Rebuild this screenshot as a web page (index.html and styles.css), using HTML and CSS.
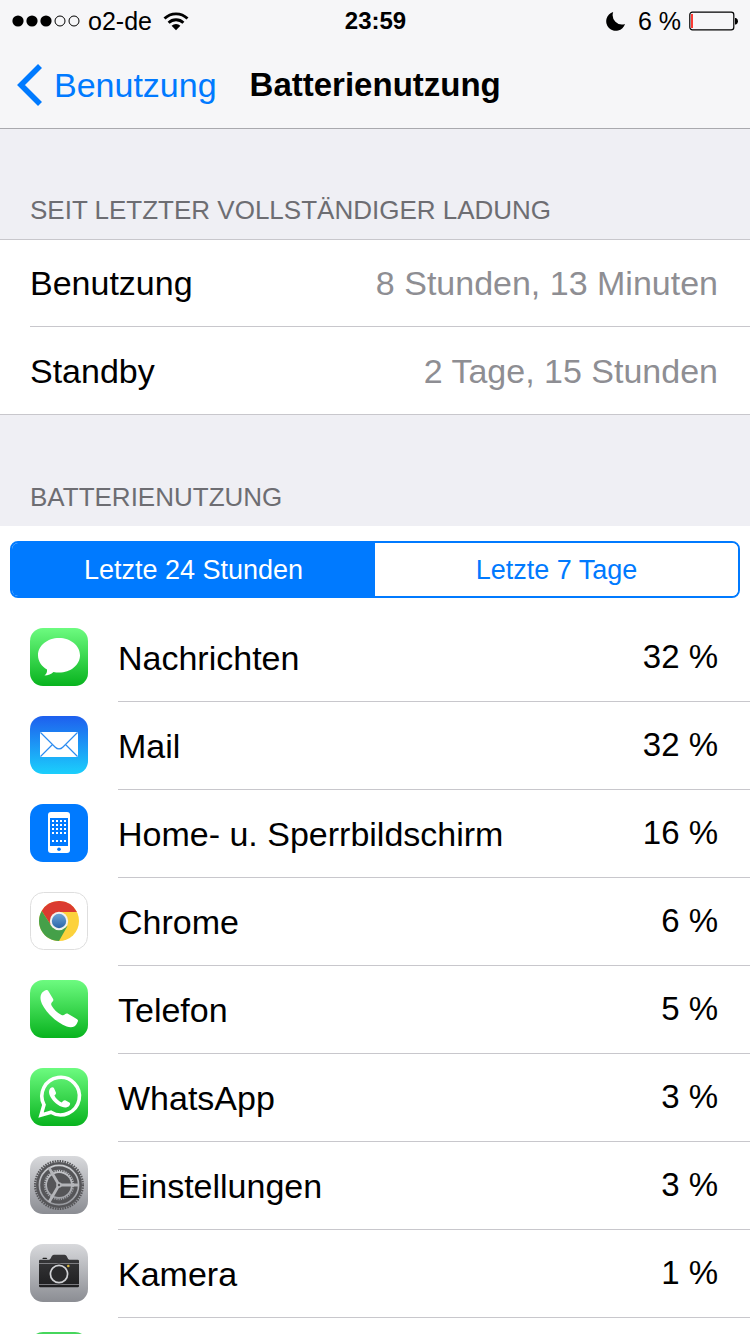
FILE: index.html
```html
<!DOCTYPE html>
<html lang="de">
<head>
<meta charset="utf-8">
<meta name="viewport" content="width=device-width, initial-scale=1">
<title>Batterienutzung</title>
<link rel="stylesheet" href="styles.css">
</head>
<body>
<svg class="defs" width="0" height="0" aria-hidden="true">
  <defs>
    <linearGradient id="green" x1="0" y1="0" x2="0" y2="1"><stop offset="0" stop-color="#6dfb80"/><stop offset="1" stop-color="#08b31e"/></linearGradient>
    <linearGradient id="blue" x1="0" y1="0" x2="0" y2="1"><stop offset="0" stop-color="#1e5fee"/><stop offset="1" stop-color="#1bcffc"/></linearGradient>
    <linearGradient id="gray" x1="0" y1="0" x2="0" y2="1"><stop offset="0" stop-color="#d8d9dc"/><stop offset="1" stop-color="#8b8d93"/></linearGradient>
    <linearGradient id="lens" x1="0" y1="0" x2="0" y2="1"><stop offset="0" stop-color="#6ca4d6"/><stop offset="1" stop-color="#2a64a8"/></linearGradient>
    <linearGradient id="body" x1="0" y1="0" x2="0" y2="1"><stop offset="0" stop-color="#3a3a3c"/><stop offset="1" stop-color="#1e1e20"/></linearGradient>
    <pattern id="apps" x="22" y="16" width="4" height="4" patternUnits="userSpaceOnUse"><rect width="2" height="2" fill="#fff"/></pattern>
  </defs>
</svg>

<header class="top">
  <div class="status">
    <div class="status-side">
      <svg width="68" height="14" viewBox="0 0 68 14" aria-hidden="true">
        <circle cx="6" cy="7" r="5.6"/><circle cx="20" cy="7" r="5.6"/><circle cx="34" cy="7" r="5.6"/>
        <g fill="none" stroke="#000"><circle cx="48" cy="7" r="5"/><circle cx="62" cy="7" r="5"/></g>
      </svg>
      <span class="carrier">o2-de</span>
      <svg class="wifi" width="26" height="20" viewBox="0 0 26 20" aria-hidden="true">
        <g fill="none" stroke="#000" stroke-width="2.8"><path d="M1.5 7.6a16.3 16.3 0 0 1 23 0"/><path d="M5.6 11.8a10.5 10.5 0 0 1 14.8 0"/></g>
        <path d="M8.6 14.8a6.2 6.2 0 0 1 8.8 0L13 19.2z"/>
      </svg>
    </div>
    <time class="clock">23:59</time>
    <div class="status-side status-right">
      <svg width="20" height="20" viewBox="0 0 20 20" aria-hidden="true"><path d="M7.2 1A9.6 9.6 0 1 0 19 13 9.4 9.4 0 0 1 7.2 1z"/></svg>
      <span class="level">6 %</span>
      <svg width="50" height="20" viewBox="0 0 50 20" aria-hidden="true"><rect x=".8" y="1.2" width="44" height="17.6" rx="2.6" fill="none" stroke="#000" stroke-width="1.2"/><path d="M2 3h2v14H2z" fill="#fb3a33"/><path d="M46 7h1q2 1 2 3.200t-2 3.200H46z"/></svg>
    </div>
  </div>
  <nav class="nav">
    <a class="back" href="#">
      <svg width="26" height="42" viewBox="0 0 26 42" aria-hidden="true"><path d="M23 2 4 21l19 19" fill="none" stroke="#007aff" stroke-width="5.600"/></svg>
      <span>Benutzung</span>
    </a>
    <h1 class="title">Batterienutzung</h1>
  </nav>
</header>

<main>
  <section>
    <h2 class="heading">SEIT LETZTER VOLLSTÄNDIGER LADUNG</h2>
    <dl class="facts">
      <div class="fact"><dt>Benutzung</dt><dd>8 Stunden, 13 Minuten</dd></div>
      <div class="fact"><dt>Standby</dt><dd>2 Tage, 15 Stunden</dd></div>
    </dl>
  </section>

  <section>
    <h2 class="heading heading-usage">BATTERIENUTZUNG</h2>
    <div class="usage">
      <div class="segments">
        <button class="segment active" type="button" aria-pressed="true">Letzte 24 Stunden</button>
        <button class="segment" type="button" aria-pressed="false">Letzte 7 Tage</button>
      </div>
      <ul class="apps">
        <li class="app">
          <svg class="icon" viewBox="0 0 58 58" aria-hidden="true"><rect width="58" height="58" rx="13" fill="url(#green)"/><path d="M29 10C17.400 10 8 17.600 8 27.300c0 6 3.600 11.100 9 14.200.3 2.500-.6 4.500-2.500 6.100 3.800-.3 6.600-1.500 9-3.700 1.800.4 3.600.7 5.500.7 11.600 0 21-7.600 21-17.300S40.600 10 29 10z" fill="#fff"/></svg>
          <div class="line"><span>Nachrichten</span><span class="share">32 %</span></div>
        </li>
        <li class="app">
          <svg class="icon" viewBox="0 0 58 58" aria-hidden="true"><rect width="58" height="58" rx="13" fill="url(#blue)"/><rect x="10" y="16" width="38" height="25" rx="1" fill="#fff"/><g fill="none" stroke="#2c8cf0" stroke-width="1.200"><path d="M10.500 16.500 25 31q4 4 8 0l14.500-14.500M10.500 40.500l12-12M47.500 40.500l-12-12"/></g></svg>
          <div class="line"><span>Mail</span><span class="share">32 %</span></div>
        </li>
        <li class="app">
          <svg class="icon" viewBox="0 0 58 58" aria-hidden="true"><rect width="58" height="58" rx="13" fill="#007aff"/><rect x="18" y="8" width="22" height="41" rx="3" fill="#fff"/><path d="M20 14h18v28H20z" fill="#007aff"/><path d="M22 16h16v14H22zM22 36h16v4H22z" fill="url(#apps)"/><circle cx="29" cy="45.300" r="1.800" fill="#007aff"/></svg>
          <div class="line"><span>Home- u. Sperrbildschirm</span><span class="share">16 %</span></div>
        </li>
        <li class="app">
          <svg class="icon" viewBox="0 0 58 58" aria-hidden="true"><rect x=".5" y=".5" width="57" height="57" rx="13" fill="#fff" stroke="#dedede"/><circle cx="29" cy="29" r="20" fill="#fcd23c"/><path d="M11.700 19A20 20 0 0 1 46.900 20H29l-7.800 13.500z" fill="#db3b30"/><path d="M11.700 19A20 20 0 0 0 29 49l8.500-15-8.500 4-7.800-4.500z" fill="#45a049"/><circle cx="29" cy="29" r="9.200" fill="#f2f2ee"/><circle cx="29" cy="29" r="7.200" fill="url(#lens)"/></svg>
          <div class="line"><span>Chrome</span><span class="share">6 %</span></div>
        </li>
        <li class="app">
          <svg class="icon" viewBox="0 0 58 58" aria-hidden="true"><rect width="58" height="58" rx="13" fill="url(#green)"/><path d="M11.300 14c1-1.900 3.200-3.500 5-3.900 1.100-.2 1.700.4 2.300 1.300l4.400 7.300c.8 1.400.3 2.300-.8 3.300-1.200 1.100-1.400 2-.5 3.800 2.300 4 5.400 6.800 9.400 9 1.700.9 2.700.7 3.900-.5 1-1 2-1.100 3.300-.4l8.400 5c1.300.8 1.500 1.500 1.100 2.600-.6 1.700-1.700 4-3.600 5-2.300 1.100-5 .8-7.500 0C27.500 43.300 16.300 33 12 24c-1.600-3.500-2.100-7-.7-10z" fill="#fff"/></svg>
          <div class="line"><span>Telefon</span><span class="share">5 %</span></div>
        </li>
        <li class="app">
          <svg class="icon" viewBox="0 0 58 58" aria-hidden="true"><rect width="58" height="58" rx="13" fill="url(#green)"/><path d="M11 47.200l3-10.400a18.800 18.800 0 1 1 7 7.400z" fill="none" stroke="#fff" stroke-width="3.600"/><path d="M20.300 20.300c1.500-1.500 2.900-1.500 3.600-.2l2 4.300c.4 1-.2 1.900-1.500 3.200 1.500 3.100 4.100 5.500 7.300 6.900 1.700-1.900 2.400-2.600 3.500-2.200l4.200 2.100c1.200.7.900 2.300-.3 3.600-1.900 1.700-4.500 1.900-7.200.8-5.700-2.300-10-6.600-12.300-11.900-.9-2.500-.8-4.900.7-6.600z" fill="#fff"/></svg>
          <div class="line"><span>WhatsApp</span><span class="share">3 %</span></div>
        </li>
        <li class="app">
          <svg class="icon" viewBox="0 0 58 58" aria-hidden="true"><rect width="58" height="58" rx="13" fill="url(#gray)"/><g fill="none" stroke="#555558"><circle cx="29" cy="29" r="23.900" stroke-width="2.200" stroke-dasharray="1.500 1"/><circle cx="29" cy="29" r="21.700" stroke-width="2.600"/><circle cx="29" cy="29" r="17" stroke-width="3.600"/><circle cx="29" cy="29" r="14.500" stroke-width="1.600" stroke-dasharray="1.200 1.100"/></g><circle cx="29" cy="29" r="12" fill="#555558"/><path d="M29 29h20M29 29 19 11.700M29 29 19 46.300" stroke="#b4b5b9" stroke-width="2.800"/><circle cx="29" cy="29" r="2.800" fill="#b4b5b9"/><circle cx="29" cy="29" r="1.200" fill="#555558"/></svg>
          <div class="line"><span>Einstellungen</span><span class="share">3 %</span></div>
        </li>
        <li class="app">
          <svg class="icon" viewBox="0 0 58 58" aria-hidden="true"><rect width="58" height="58" rx="13" fill="url(#gray)"/><path d="M13 13.700h3.500l.8 1.300h-5z" fill="#222"/><path d="M9 17q0-1.200 1.200-1.200H19c2 0 2.300-5 5-5h10.500c2.700 0 3 5 5 5h8.300Q49 15.800 49 17v25q0 1.300-1.200 1.300H10.200Q9 43.300 9 42z" fill="url(#body)"/><path d="M9 19.500h40M9 40.500h40" stroke="#909196" stroke-width=".8"/><circle cx="29" cy="30" r="10.500" fill="#29292b"/><circle cx="29" cy="30" r="8.600" fill="none" stroke="#d0d1d4" stroke-width="1.700"/><circle cx="38.300" cy="22" r="1.300" fill="#d8b640"/></svg>
          <div class="line"><span>Kamera</span><span class="share">1 %</span></div>
        </li>
        <li class="app">
          <svg class="icon" viewBox="0 0 58 58" aria-hidden="true"><rect width="58" height="58" rx="13" fill="#46d65c"/></svg>
          <div class="line"></div>
        </li>
      </ul>
    </div>
  </section>
</main>
</body>
</html>
```

FILE: styles.css
```css
* {
  box-sizing: border-box;
  margin: 0;
  padding: 0;
}

body {
  display: flex;
  flex-direction: column;
  height: 100vh;
  overflow: hidden;
  background: #efeff4;
  color: #000;
  font-family: "Liberation Sans", Arial, Helvetica, sans-serif;
  font-size: 34px;
  line-height: 40px;
}

svg {
  display: block;
  flex: none;
}

.defs {
  position: absolute;
}

.top {
  flex: none;
  background: #f6f6f8;
  border-bottom: 1px solid #a9a9ae;
}

.status {
  display: grid;
  grid-template-columns: 1fr auto 1fr;
  align-items: center;
  height: 41px;
  padding: 0 11px 0 12px;
  font-size: 25px;
}

.status-side {
  display: flex;
  align-items: center;
  gap: 8px;
}

.wifi {
  margin-left: 3px;
}

.status-right {
  justify-content: flex-end;
}

.level {
  margin-left: 4px;
}

.clock {
  font-size: 24px;
  font-weight: bold;
}

.nav {
  display: flex;
  align-items: center;
  gap: 33px;
  height: 87px;
  padding: 0 17px;
}

.back {
  display: flex;
  align-items: center;
  gap: 11px;
  color: #007aff;
  text-decoration: none;
}

.title {
  font-size: 33px;
}

main {
  flex: 1;
  min-height: 0;
}

.heading {
  padding: 66px 30px 14px;
  color: #6d6d72;
  font-size: 26px;
  font-weight: normal;
  line-height: 30px;
}

.heading-usage {
  padding-top: 67px;
}

.facts {
  background: #fff;
  border-top: 1px solid #c8c7cc;
  border-bottom: 1px solid #c8c7cc;
}

.fact {
  display: flex;
  justify-content: space-between;
  margin-left: 30px;
  padding: 24px 32px 23px 0;
}

.fact + .fact {
  border-top: 1px solid #c8c7cc;
}

.fact:first-child {
  padding-top: 23px;
}

.fact dd {
  color: #8e8e93;
}

.usage {
  padding-top: 15px;
  background: #fff;
}

.segments {
  display: flex;
  height: 57px;
  margin: 0 10px 16px;
  overflow: hidden;
  border: 2px solid #007aff;
  border-radius: 8px;
}

.segment {
  flex: 1;
  border: 0;
  background: #fff;
  color: #007aff;
  font: inherit;
  font-size: 27px;
}

.active {
  background: #007aff;
  color: #fff;
}

.apps {
  list-style: none;
}

.app {
  display: flex;
  gap: 30px;
  height: 88px;
  padding-left: 30px;
}

.icon {
  width: 58px;
  height: 58px;
  margin-top: 14px;
}

.line {
  display: flex;
  flex: 1;
  justify-content: space-between;
  padding: 24px 32px 0 0;
  border-bottom: 1px solid #c8c7cc;
}

.share {
  font-size: 33px;
  line-height: 38px;
}
```
